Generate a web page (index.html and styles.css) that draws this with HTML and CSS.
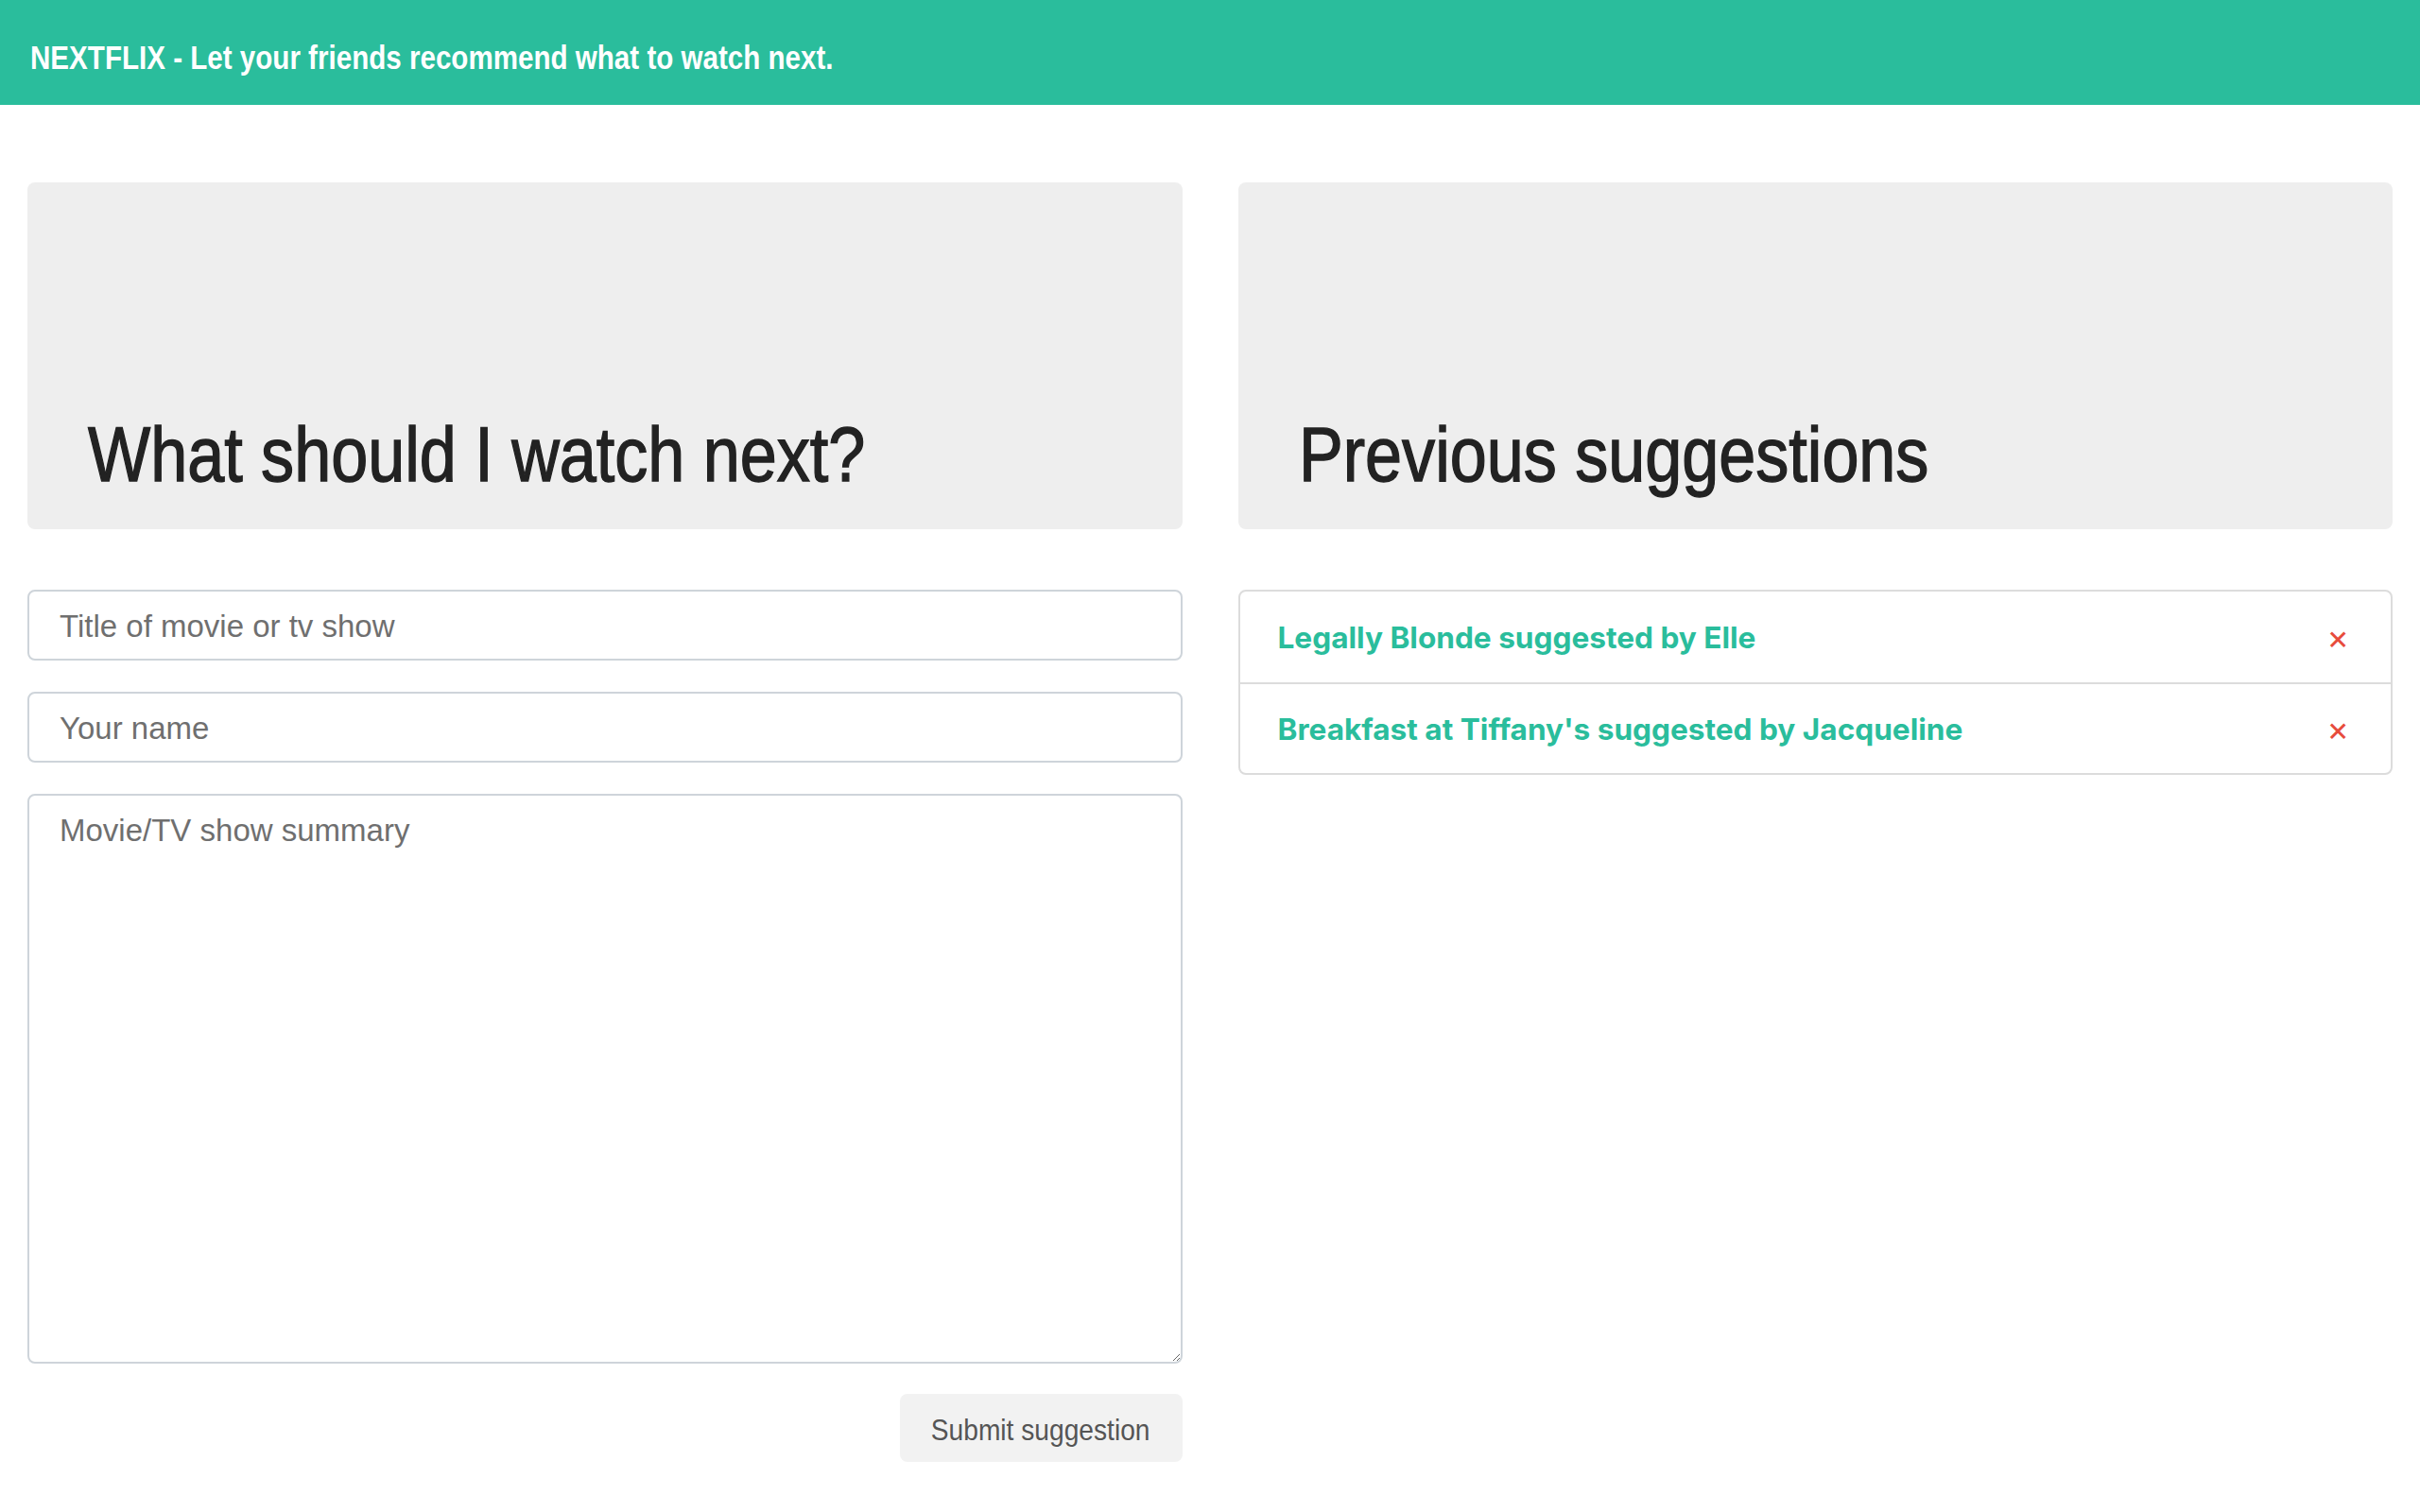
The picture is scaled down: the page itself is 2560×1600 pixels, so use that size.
FILE: index.html
```html
<!DOCTYPE html>
<html lang="en">
<head>
<meta charset="utf-8">
<title>Nextflix</title>
<link rel="stylesheet" href="styles.css">
</head>
<body>
<header class="navbar">
  <span class="brand">NEXTFLIX - Let your friends recommend what to watch next.</span>
</header>
<main class="container">
  <section class="col">
    <div class="jumbotron"><h1 class="display">What should I watch next?</h1></div>
    <form class="form">
      <input class="field" type="text" placeholder="Title of movie or tv show">
      <input class="field" type="text" placeholder="Your name">
      <textarea class="field area" placeholder="Movie/TV show summary"></textarea>
      <div class="actions"><button type="button" class="btn"><span class="btn-label">Submit suggestion</span></button></div>
    </form>
  </section>
  <section class="col">
    <div class="jumbotron"><h1 class="display">Previous suggestions</h1></div>
    <ul class="list">
      <li class="item"><span class="title">Legally Blonde suggested by Elle</span><span class="remove">×</span></li>
      <li class="item"><span class="title">Breakfast at Tiffany's suggested by Jacqueline</span><span class="remove">×</span></li>
    </ul>
  </section>
</main>
</body>
</html>
```
FILE: styles.css
```css
html, body {
  margin: 0;
  padding: 0;
  background: #fff;
  font-family: "Liberation Sans", Arial, sans-serif;
  color: #212529;
}
.navbar {
  height: 111px;
  box-sizing: border-box;
  background: #2abd9c;
  display: flex;
  align-items: center;
  padding: 11px 0 0 32px;
}
.brand {
  display: inline-block;
  font-family: "Liberation Sans", Arial, sans-serif;
  font-weight: 700;
  color: #fff;
  font-size: 35px;
  white-space: nowrap;
  transform: scaleX(0.845);
  transform-origin: left center;
}
.container {
  display: grid;
  grid-template-columns: 1fr 1fr;
  column-gap: 59px;
  padding: 82px 29px 40px;
}
.jumbotron {
  height: 367px;
  box-sizing: border-box;
  background: #eeeeee;
  border-radius: 8px;
  display: flex;
  align-items: flex-end;
  padding: 0 64px 38px;
}
.display {
  margin: 0;
  font-family: "Liberation Sans", Arial, sans-serif;
  font-weight: 400;
  -webkit-text-stroke: 1.4px #222;
  font-size: 82px;
  line-height: 1;
  color: #222;
  white-space: nowrap;
  transform: scaleX(0.855);
  transform-origin: left bottom;
}
.form {
  margin-top: 64px;
  display: flex;
  flex-direction: column;
  gap: 33px;
}
.field {
  display: block;
  box-sizing: border-box;
  width: 100%;
  height: 75px;
  border: 2px solid #ced4da;
  border-radius: 8px;
  padding: 2px 32px 0;
  font-family: "Liberation Sans", Arial, sans-serif;
  font-size: 33px;
  color: #495057;
  background: #fff;
  margin: 0;
}
.field::placeholder { color: #6f6f6f; }
.area {
  height: 603px;
  padding-top: 18px;
  resize: vertical;
}
.actions {
  display: flex;
  justify-content: flex-end;
  margin-top: -1px;
}
.btn {
  width: 299px;
  height: 72px;
  border: none;
  border-radius: 8px;
  background: #f2f2f2;
  color: #555;
  padding: 4px 0 0;
  box-sizing: border-box;
  display: flex;
  align-items: center;
  justify-content: center;
}
.btn-label {
  display: inline-block;
  font-family: "Liberation Sans", Arial, sans-serif;
  font-size: 32px;
  white-space: nowrap;
  transform: scaleX(0.88);
}
.list {
  list-style: none;
  margin: 64px 0 0;
  padding: 0;
  border: 2px solid #dcdcdc;
  border-radius: 8px;
}
.item {
  height: 96px;
  box-sizing: border-box;
  display: flex;
  align-items: center;
  justify-content: space-between;
  padding: 0 44px 0 40px;
}
.item + .item { border-top: 2px solid #dcdcdc; }
.title {
  font-family: Inter, "Liberation Sans", sans-serif;
  color: #2abd9c;
  font-weight: 700;
  font-size: 31.6px;
}
.remove {
  font-family: Inter, "Liberation Sans", sans-serif;
  color: #e74c3c;
  font-size: 36px;
  line-height: 1;
}
```
